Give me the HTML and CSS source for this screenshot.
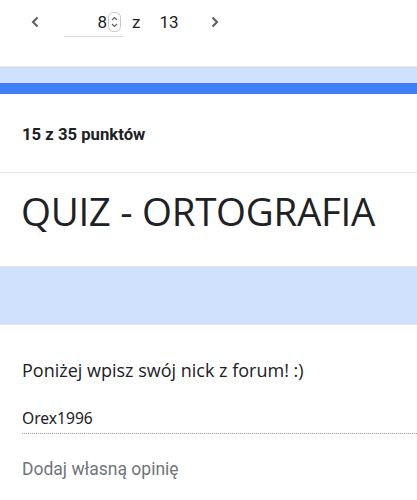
FILE: index.html
```html
<!DOCTYPE html>
<html lang="pl">
<head>
    <meta charset="UTF-8">
    <meta name="viewport" content="width=device-width, initial-scale=1.0">
    <title>QUIZ - ORTOGRAFIA</title>
    <link rel="stylesheet" href="styles.css">
</head>
<body>
    <div class="pager">
        <span class="arrow">
            <svg width="12" height="12" viewBox="0 0 12 12"><path d="M8.5 1.5 4 6 8.5 10.5" fill="none" stroke="#5f6368" stroke-width="2.2"/></svg>
        </span>
        <div class="page-input">
            <span class="page-num">8</span>
            <span class="spin">
                <svg width="13" height="20" viewBox="0 0 13 20"><rect x="0.5" y="0.5" width="12" height="19" rx="5" fill="#fff" stroke="#c4c7c5"/><path d="M4 8 6.5 5.5 9 8M4 12 6.5 14.5 9 12" fill="none" stroke="#5f6368" stroke-width="1.2"/></svg>
            </span>
        </div>
        <span class="of">z</span>
        <span class="total">13</span>
        <span class="arrow next">
            <svg width="12" height="12" viewBox="0 0 12 12"><path d="M3.5 1.5 8 6 3.5 10.5" fill="none" stroke="#5f6368" stroke-width="2.2"/></svg>
        </span>
    </div>

    <div class="band"></div>
    <div class="accent"></div>

    <div class="score">15 z 35 punktów</div>

    <div class="title-card">
        <h1>QUIZ - ORTOGRAFIA</h1>
    </div>

    <div class="section"></div>

    <div class="question">
        <p class="q-text">Poniżej wpisz swój nick z forum! :)</p>
        <p class="answer">Orex1996</p>
        <p class="feedback">Dodaj własną opinię</p>
    </div>
</body>
</html>
```

FILE: styles.css
```css
* {
  margin: 0;
  padding: 0;
  box-sizing: border-box;
}

body {
  font-family: Roboto, Arial, sans-serif;
  background-color: #fff;
  color: #202124;
  width: 417px;
  overflow: hidden;
}

/* top pager */
.pager {
  height: 67px;
  display: flex;
  align-items: center;
  padding: 0 0 22px 29px;
  border-bottom: 1px solid #e8eaed;
}

.arrow {
  display: flex;
  width: 12px;
}

.page-input {
  display: flex;
  align-items: center;
  justify-content: flex-end;
  width: 59px;
  margin-left: 23px;
  height: 30px;
  border-bottom: 1px solid #dadce0;
  gap: 1px;
}

.page-num {
  font-size: 17px;
  color: #202124;
}

.spin {
  display: flex;
  margin-right: 2px;
}

.of {
  font-size: 17px;
  margin-left: 9px;
}

.total {
  font-size: 17px;
  margin-left: 19px;
}

.next {
  margin-left: 30px;
}

/* header bands */
.band {
  height: 16px;
  background-color: #cfe0fc;
}

.accent {
  height: 11px;
  background-color: #3d7ff6;
}

.score {
  height: 79px;
  display: flex;
  align-items: center;
  padding: 2px 0 0 22px;
  font-size: 16.7px;
  font-weight: 700;
  border-bottom: 1px solid #e2e4e8;
}

.title-card {
  height: 94px;
  padding: 15px 0 0 21px;
  border-bottom: 1px solid #e2e4e8;
}

h1 {
  font-family: "Open Sans", sans-serif;
  font-weight: 400;
  font-size: 38.5px;
  line-height: 46px;
  letter-spacing: -0.3px;
}

.section {
  height: 58px;
  background-color: #cfe0fc;
  border-bottom: 1px solid #e2e4e8;
}

.question {
  padding: 32px 0 0 22px;
}

.q-text {
  font-family: "Open Sans", sans-serif;
  font-size: 18px;
  line-height: 26px;
}

.answer {
  margin-top: 25px;
  font-family: "Noto Sans", sans-serif;
  font-size: 15.6px;
  line-height: 21px;
  padding-bottom: 4px;
  border-bottom: 1px dotted #9aa0a6;
}

.feedback {
  margin-top: 23px;
  font-size: 17.5px;
  color: #70757a;
  line-height: 24px;
}
```
